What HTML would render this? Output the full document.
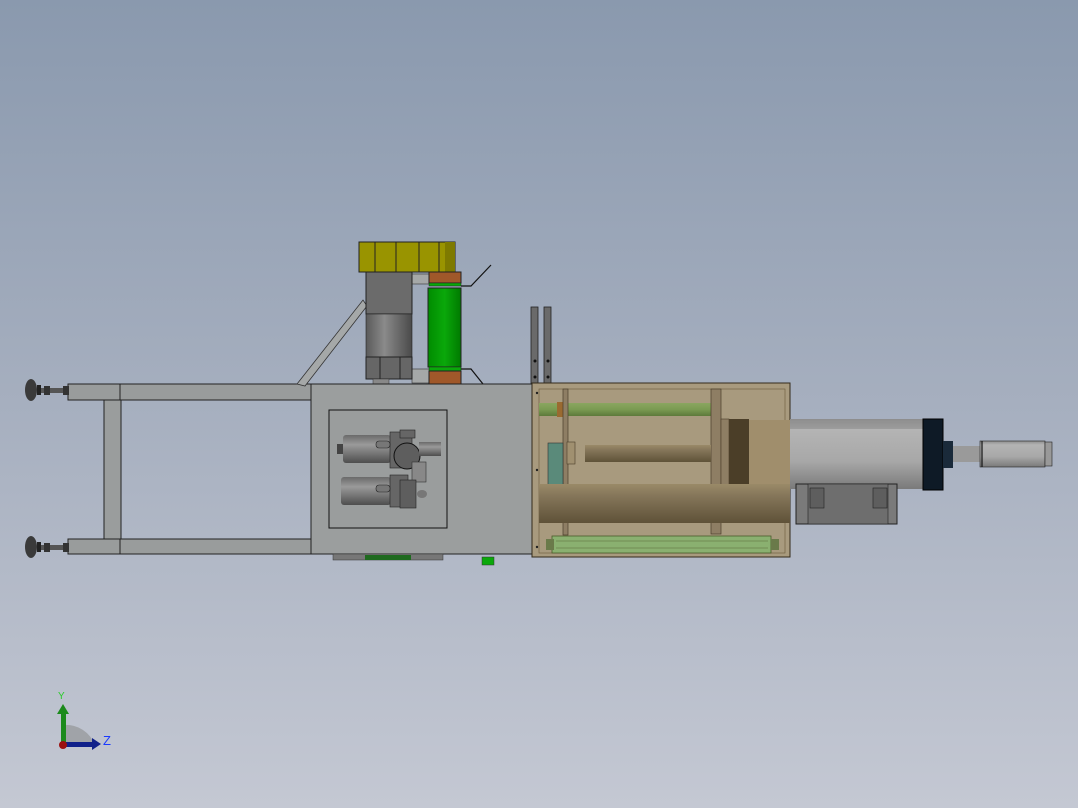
<!DOCTYPE html>
<html><head><meta charset="utf-8"><style>
html,body{margin:0;padding:0;width:1078px;height:808px;overflow:hidden}
svg{display:block}
</style></head><body>
<svg width="1078" height="808" viewBox="0 0 1078 808" xmlns="http://www.w3.org/2000/svg">
<defs>
<linearGradient id="bg" x1="0" y1="0" x2="0" y2="1">
<stop offset="0" stop-color="#8a99ae"/><stop offset="0.5" stop-color="#a6afbf"/><stop offset="1" stop-color="#c4c8d3"/>
</linearGradient>
<linearGradient id="cylV" x1="0" y1="0" x2="0" y2="1">
<stop offset="0" stop-color="#6a6a6a"/><stop offset="0.35" stop-color="#9a9a9a"/><stop offset="1" stop-color="#4e4e4e"/>
</linearGradient>
<linearGradient id="motH" x1="0" y1="0" x2="1" y2="0">
<stop offset="0" stop-color="#5a5a5a"/><stop offset="0.4" stop-color="#8a8a8a"/><stop offset="1" stop-color="#4a4a4a"/>
</linearGradient>
<linearGradient id="bigCyl" x1="0" y1="0" x2="0" y2="1">
<stop offset="0" stop-color="#8e8e8e"/><stop offset="0.15" stop-color="#b4b4b4"/><stop offset="0.6" stop-color="#a8a8a8"/><stop offset="1" stop-color="#7a7a7a"/>
</linearGradient>
<linearGradient id="tanRod" x1="0" y1="0" x2="0" y2="1">
<stop offset="0" stop-color="#9a8a68"/><stop offset="0.3" stop-color="#85765a"/><stop offset="1" stop-color="#5f5238"/>
</linearGradient>
<linearGradient id="grRod" x1="0" y1="0" x2="0" y2="1">
<stop offset="0" stop-color="#8aa660"/><stop offset="0.5" stop-color="#7a9a52"/><stop offset="1" stop-color="#5e7a3a"/>
</linearGradient>
<linearGradient id="grn" x1="0" y1="0" x2="1" y2="0">
<stop offset="0" stop-color="#008c00"/><stop offset="0.5" stop-color="#0aa80a"/><stop offset="1" stop-color="#007a00"/>
</linearGradient>
</defs>
<rect width="1078" height="808" fill="url(#bg)"/>

<!-- frame -->
<g stroke="#222" stroke-width="1">
<rect x="68" y="384" width="243" height="16" fill="#999c9c"/>
<rect x="68" y="539" width="243" height="15" fill="#999c9c"/>
<rect x="104" y="400" width="17" height="139" fill="#9a9d9d"/>
<line x1="120" y1="384" x2="120" y2="400"/><line x1="120" y1="539" x2="120" y2="554"/>
</g>
<!-- feet -->
<g>
<rect x="40" y="388" width="28" height="5" fill="#555"/>
<rect x="40" y="545" width="28" height="5" fill="#555"/>
<rect x="44" y="386" width="6" height="9" fill="#333"/><rect x="63" y="386" width="6" height="9" fill="#333"/>
<rect x="44" y="543" width="6" height="9" fill="#333"/><rect x="63" y="543" width="6" height="9" fill="#333"/>
<ellipse cx="31" cy="390" rx="6" ry="11" fill="#3a3a3a"/><ellipse cx="31" cy="547" rx="6" ry="11" fill="#3a3a3a"/>
<rect x="37" y="385" width="4" height="10" fill="#222"/><rect x="37" y="542" width="4" height="10" fill="#222"/>
</g>
<!-- brace -->
<polygon points="297,384 363,300 367,306 305,386" fill="#a5a8a8" stroke="#333" stroke-width="0.8"/>
<!-- gear rod connecting -->
<rect x="412" y="274" width="18" height="10" fill="#a5a8a8" stroke="#333" stroke-width="0.6"/>
<rect x="412" y="369" width="18" height="14" fill="#a5a8a8" stroke="#333" stroke-width="0.6"/>
<!-- motor -->
<rect x="366" y="272" width="46" height="42" fill="#6b6b6b" stroke="#222"/>
<rect x="366" y="314" width="46" height="43" fill="url(#motH)" stroke="#222" stroke-width="0.6"/>
<rect x="366" y="357" width="46" height="22" fill="#666" stroke="#222"/>
<line x1="380" y1="357" x2="380" y2="379" stroke="#222"/><line x1="400" y1="357" x2="400" y2="379" stroke="#222"/>
<rect x="373" y="379" width="16" height="5" fill="#888" stroke="#333" stroke-width="0.5"/>
<!-- gearbox -->
<rect x="359" y="242" width="96" height="30" fill="#999400" stroke="#222"/>
<g stroke="#222"><line x1="375" y1="242" x2="375" y2="272"/><line x1="396" y1="242" x2="396" y2="272"/><line x1="419" y1="242" x2="419" y2="272"/><line x1="439" y1="242" x2="439" y2="272"/></g>
<rect x="445" y="242" width="10" height="30" fill="#7e7a00"/>
<!-- roller -->
<rect x="429" y="272" width="32" height="11" fill="#a0582a" stroke="#222"/>
<rect x="429" y="283" width="32" height="3" fill="#0aa80a" stroke="#222" stroke-width="0.5"/>
<rect x="428" y="288" width="33" height="79" fill="url(#grn)" stroke="#222"/>
<rect x="429" y="367" width="32" height="4" fill="#0aa80a" stroke="#222" stroke-width="0.5"/>
<rect x="429" y="371" width="32" height="13" fill="#a0582a" stroke="#222"/>
<polyline points="461,286 471,286 491,265" fill="none" stroke="#111" stroke-width="1.2"/>
<polyline points="461,369 471,369 483,384" fill="none" stroke="#111" stroke-width="1.2"/>
<!-- gray box -->
<rect x="311" y="384" width="221" height="170" fill="#9b9e9e" stroke="#222"/>
<rect x="329" y="410" width="118" height="118" fill="#9a9d9d" stroke="#111"/>
<!-- valves -->
<rect x="343" y="435" width="48" height="28" rx="3" fill="url(#cylV)"/>
<rect x="337" y="444" width="6" height="10" fill="#444"/>
<rect x="390" y="432" width="22" height="36" fill="#666" stroke="#222" stroke-width="0.6"/>
<circle cx="407" cy="456" r="13" fill="#5e5e5e" stroke="#111"/>
<rect x="400" y="430" width="15" height="8" fill="#666" stroke="#222" stroke-width="0.6"/>
<rect x="419" y="442" width="22" height="14" fill="url(#cylV)"/>
<rect x="412" y="462" width="14" height="20" fill="#888" stroke="#333" stroke-width="0.6"/>
<rect x="341" y="477" width="50" height="28" rx="3" fill="url(#cylV)"/>
<rect x="390" y="475" width="18" height="32" fill="#666" stroke="#222" stroke-width="0.6"/>
<rect x="400" y="480" width="16" height="28" fill="#5e5e5e" stroke="#222" stroke-width="0.6"/>
<ellipse cx="422" cy="494" rx="5" ry="4" fill="#777"/>
<rect x="376" y="441" width="14" height="7" rx="3" fill="#777" stroke="#222" stroke-width="0.6"/>
<rect x="376" y="485" width="14" height="7" rx="3" fill="#777" stroke="#222" stroke-width="0.6"/>
<!-- bottom bits -->
<rect x="333" y="554" width="110" height="6" fill="#777" stroke="#333" stroke-width="0.5"/>
<rect x="365" y="555" width="46" height="5" fill="#1f6a1f"/>
<rect x="482" y="557" width="12" height="8" fill="#0aa80a" stroke="#333" stroke-width="0.5"/>
<!-- vertical bars -->
<rect x="531" y="307" width="7" height="77" fill="#6a6a6a" stroke="#222" stroke-width="0.8"/>
<rect x="544" y="307" width="7" height="77" fill="#6a6a6a" stroke="#222" stroke-width="0.8"/>
<g fill="#111"><circle cx="535" cy="361" r="1.5"/><circle cx="535" cy="377" r="1.5"/><circle cx="548" cy="361" r="1.5"/><circle cx="548" cy="377" r="1.5"/></g>
<!-- tan box -->
<rect x="532" y="383" width="258" height="174" fill="#a89a7e" stroke="#332a1a"/>
<rect x="539" y="389" width="246" height="164" fill="none" stroke="#6a5a3a" stroke-width="0.6"/>
<rect x="539" y="403" width="172" height="13" fill="url(#grRod)"/>
<rect x="557" y="402" width="7" height="15" fill="#9a6a30"/>
<rect x="563" y="389" width="5" height="146" fill="#8e7e64" stroke="#4a3e2a" stroke-width="0.7"/>
<rect x="711" y="389" width="10" height="145" fill="#8e7e64" stroke="#4a3e2a" stroke-width="0.7"/>
<rect x="721" y="419" width="8" height="66" fill="#8e7e64" stroke="#4a3e2a" stroke-width="0.6"/>
<rect x="729" y="419" width="20" height="66" fill="#4b3e28"/>
<rect x="749" y="420" width="41" height="64" fill="#a08e6c"/>
<rect x="585" y="445" width="126" height="17" fill="url(#tanRod)"/>
<rect x="567" y="442" width="8" height="22" fill="#a09070" stroke="#4a3e2a" stroke-width="0.6"/>
<rect x="548" y="443" width="15" height="42" fill="#5a8a7a" stroke="#333" stroke-width="0.6"/>
<rect x="539" y="484" width="251" height="39" fill="url(#tanRod)"/>
<rect x="552" y="536" width="219" height="17" fill="#8ab070" stroke="#4a5a2a" stroke-width="0.8"/>
<line x1="556" y1="541" x2="768" y2="541" stroke="#5a6a3a" stroke-width="0.6"/>
<line x1="556" y1="548" x2="768" y2="548" stroke="#5a6a3a" stroke-width="0.6"/>
<rect x="546" y="539" width="8" height="11" fill="#6a7a4a"/><rect x="771" y="539" width="8" height="11" fill="#6a7a4a"/>
<g fill="#222"><circle cx="537" cy="393" r="1.2"/><circle cx="537" cy="470" r="1.2"/><circle cx="537" cy="547" r="1.2"/></g>
<!-- cylinder -->
<rect x="790" y="419" width="133" height="70" fill="url(#bigCyl)"/>
<rect x="790" y="419" width="133" height="10" fill="#8e8e8e" opacity="0.6"/>
<rect x="923" y="419" width="20" height="71" fill="#0e1a26" stroke="#000"/>
<rect x="943" y="441" width="10" height="27" fill="#1a2a3a"/>
<rect x="953" y="446" width="27" height="16" fill="#9a9a9a"/>
<rect x="980" y="441" width="65" height="26" fill="url(#bigCyl)" stroke="#222" stroke-width="0.6"/>
<line x1="982" y1="441" x2="982" y2="467" stroke="#111" stroke-width="1.2"/>
<rect x="1045" y="442" width="7" height="24" fill="#999" stroke="#222" stroke-width="0.6"/>
<!-- bracket -->
<rect x="796" y="484" width="101" height="40" fill="#7a7a7a" stroke="#222"/>
<rect x="808" y="484" width="80" height="40" fill="#6e6e6e" stroke="#222" stroke-width="0.6"/>
<rect x="810" y="488" width="14" height="20" fill="#5e5e5e" stroke="#222" stroke-width="0.6"/>
<rect x="873" y="488" width="14" height="20" fill="#5e5e5e" stroke="#222" stroke-width="0.6"/>
<!-- axis triad -->
<path d="M64,745 L64,725 A31,31 0 0 1 95,745 Z" fill="#a0a3a8"/>
<rect x="61" y="712" width="5" height="33" fill="#1c8a1c"/>
<polygon points="57,714 63,704 69,714" fill="#1c8a1c"/>
<rect x="64" y="742" width="29" height="5" fill="#10208a"/>
<polygon points="92,738 101,744 92,750" fill="#10208a"/>
<circle cx="63" cy="745" r="4" fill="#9a1010"/>
<text x="58" y="699" font-family="Liberation Sans, sans-serif" font-size="10" fill="#2acc2a">Y</text>
<text x="103" y="745" font-family="Liberation Sans, sans-serif" font-size="13" fill="#1a3aff">Z</text>
</svg>
</body></html>
